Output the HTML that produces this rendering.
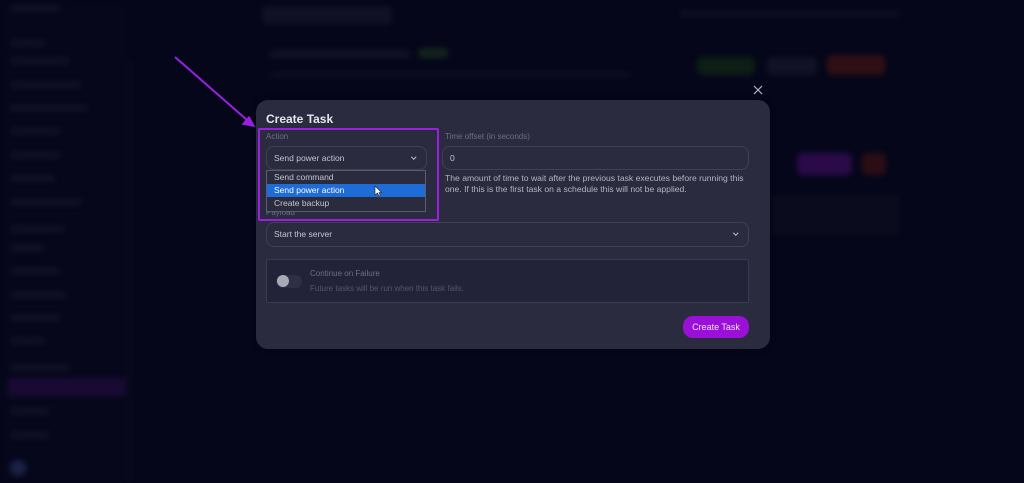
<!DOCTYPE html>
<html><head><style>
*{box-sizing:border-box;margin:0;padding:0}
body{width:1024px;height:483px;background:#05061a;font-family:"Liberation Sans",sans-serif;position:relative;overflow:hidden}
.a{position:absolute}
.bl{filter:blur(3px);opacity:.55}
.sb{position:absolute;left:10px;height:6px;background:#1c1d30;border-radius:3px}
.lbl{position:absolute;font-size:8px;color:#6d6e84}
.inp{position:absolute;border:1px solid #404155;border-radius:8px;background:#2a2b3e;font-size:8.5px;color:#c4c4d0;padding-left:7px;line-height:22px}
.chev{position:absolute;right:11px;top:8px;width:3.5px;height:3.5px;border-right:1.2px solid #c0c0cc;border-bottom:1.2px solid #c0c0cc;transform:rotate(45deg)}
</style></head><body>
<div class="a bl" style="left:0;top:0;width:130px;height:483px;background:#07081c"></div>
<div class="a bl" style="left:127px;top:60px;width:6px;height:420px;background:#0c0d20"></div>
<div class="sb bl" style="top:5px;width:50px"></div>
<div class="sb bl" style="top:40px;width:35px"></div>
<div class="sb bl" style="top:58px;width:60px"></div>
<div class="sb bl" style="top:82px;width:72px"></div>
<div class="sb bl" style="top:105px;width:78px"></div>
<div class="sb bl" style="top:128px;width:50px"></div>
<div class="sb bl" style="top:152px;width:50px"></div>
<div class="sb bl" style="top:175px;width:45px"></div>
<div class="sb bl" style="top:199px;width:72px"></div>
<div class="sb bl" style="top:226px;width:55px"></div>
<div class="sb bl" style="top:245px;width:35px"></div>
<div class="sb bl" style="top:268px;width:50px"></div>
<div class="sb bl" style="top:292px;width:57px"></div>
<div class="sb bl" style="top:315px;width:50px"></div>
<div class="sb bl" style="top:338px;width:35px"></div>
<div class="sb bl" style="top:365px;width:60px"></div>
<div class="a bl" style="left:8px;top:378px;width:118px;height:18px;background:#2a0e48"></div>
<div class="sb bl" style="top:408px;width:40px"></div>
<div class="sb bl" style="top:432px;width:40px"></div>
<div class="a bl" style="left:10px;top:460px;width:16px;height:16px;border-radius:50%;background:#2a3a6a"></div>
<div class="a bl" style="left:262px;top:6px;width:130px;height:18px;border-radius:5px;background:#1a1b2c"></div>
<div class="a bl" style="left:270px;top:50px;width:140px;height:8px;background:#1c1d2e"></div>
<div class="a bl" style="left:418px;top:48px;width:30px;height:10px;border-radius:4px;background:#1f3a1f"></div>
<div class="a bl" style="left:270px;top:72px;width:360px;height:5px;background:#15162a"></div>
<div class="a bl" style="left:680px;top:10px;width:220px;height:7px;background:#15162a"></div>
<div class="a bl" style="left:697px;top:57px;width:58px;height:18px;border-radius:5px;background:#123312"></div>
<div class="a bl" style="left:767px;top:57px;width:50px;height:18px;border-radius:5px;background:#1c1d2e"></div>
<div class="a bl" style="left:827px;top:55px;width:58px;height:20px;border-radius:5px;background:#521810"></div>
<div class="a bl" style="left:797px;top:153px;width:55px;height:22px;border-radius:5px;background:#4a0f70"></div>
<div class="a bl" style="left:862px;top:153px;width:24px;height:22px;border-radius:5px;background:#4a1512"></div>
<div class="a bl" style="left:770px;top:195px;width:130px;height:40px;background:#0f1020"></div>
<svg class="a" style="left:752px;top:84px" width="12" height="12"><path d="M2 2L10 10M10 2L2 10" stroke="#b8b8c4" stroke-width="1.2"/></svg>
<div class="a" style="left:256px;top:100px;width:514px;height:249px;background:#2a2b3e;border-radius:12px;box-shadow:0 0 6px rgba(0,0,0,.5)"></div>
<div class="a" style="left:266px;top:112px;font-size:12px;font-weight:bold;color:#e6e6ee">Create Task</div>
<div class="lbl" style="left:266px;top:132px">Action</div>
<div class="inp" style="left:266px;top:146px;width:161px;height:24px">Send power action<div class="chev"></div></div>
<div class="lbl" style="left:445px;top:132px">Time offset (in seconds)</div>
<div class="inp" style="left:442px;top:146px;width:307px;height:24px">0</div>
<div class="a" style="left:445px;top:173px;font-size:8.6px;line-height:11px;color:#b4b4c2;width:304px">The amount of time to wait after the previous task executes before running this one. If this is the first task on a schedule this will not be applied.</div>
<div class="lbl" style="left:266px;top:208px">Payload</div>
<div class="inp" style="left:266px;top:222px;width:483px;height:25px">Start the server<div class="chev"></div></div>
<div class="a" style="left:266px;top:259px;width:483px;height:44px;background:#222339;border:1px solid #3a3b50;border-radius:2px"></div>
<div class="a" style="left:276px;top:275px;width:26px;height:13px;border-radius:7px;background:#2e2f44"></div>
<div class="a" style="left:277px;top:275px;width:12px;height:12px;border-radius:50%;background:#a9a9b8"></div>
<div class="a" style="left:310px;top:269px;font-size:8px;color:#6d6e84">Continue on Failure</div>
<div class="a" style="left:310px;top:284px;font-size:8px;color:#54556a">Future tasks will be run when this task fails.</div>
<div class="a" style="left:683px;top:316px;width:66px;height:22px;border-radius:10px;background:#9a10d8;color:#f0e0ff;font-size:9px;text-align:center;line-height:22px">Create Task</div>
<div class="a" style="left:266px;top:170px;width:160px;height:42px;background:#2a2b3d;border:1px solid #5c5d6c;font-size:8.5px;color:#c4c4d0">
<div style="height:13px;line-height:13px;padding-left:7px">Send command</div>
<div style="height:13px;line-height:13px;padding-left:7px;background:#1e6cd8;color:#fff">Send power action</div>
<div style="height:13px;line-height:13px;padding-left:7px">Create backup</div>
</div>
<svg class="a" style="left:374px;top:185px" width="8" height="12"><path d="M1 1L1 10L3.5 8L5 11L6.3 10.4L5 7.5L7.5 7.5Z" fill="#fff" stroke="#222" stroke-width=".6"/></svg>
<div class="a" style="left:258px;top:128px;width:181px;height:93px;border:2px solid #9b1fe0;border-radius:2px"></div>
<svg class="a" style="left:0;top:0" width="300" height="150"><path d="M175 57L247 120" stroke="#9b1fe0" stroke-width="2"/><path d="M254 126L243 124L249 117Z" fill="#9b1fe0" stroke="#9b1fe0" stroke-width="1.5"/></svg>
</body></html>
